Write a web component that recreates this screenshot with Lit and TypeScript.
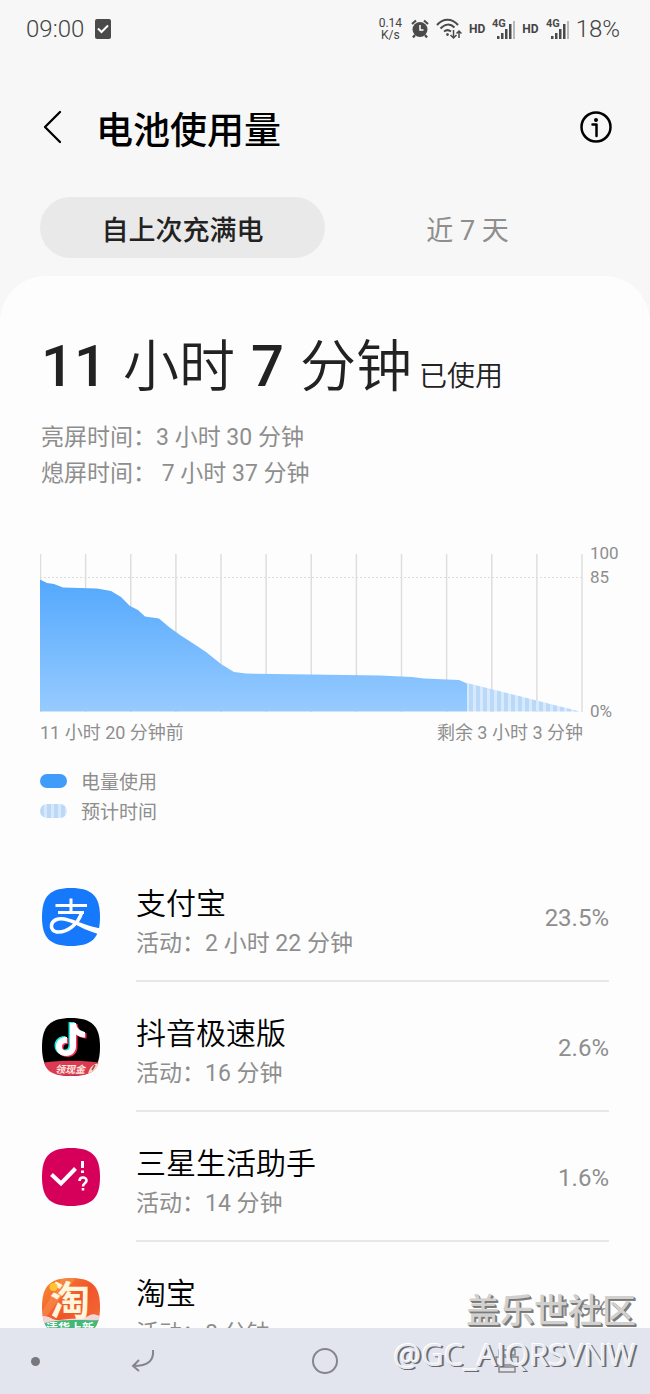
import { LitElement, html, svg, css } from "lit";
import { customElement, state } from "lit/decorators.js";

const SQUIRCLE = "M29 0C50 0 58 8 58 29S50 58 29 58 0 50 0 29 8 0 29 0Z";

const alipay = svg`
  <path d=${SQUIRCLE} fill="#1678fb"/>
  <g fill="none" stroke="#fff">
    <path d="M13.500 17.500H45M16 24.500H42M29 10.500V24" stroke-width="3"/>
    <path d="M39.500 25C36 36 26 44 16.500 44C11 44 9 40.500 9.500 37C10.500 32 16 30 22 31C31 32.500 40 38.500 57 42" stroke-width="3.600"/>
  </g>
  <path d="M33 33.500C41 37.500 49 39 57.500 40.500C57 43 56.500 44.500 56 46C46 43 38 39 31 35Z" fill="#fff"/>`;

const note = "M28 5H34C34.500 10 38 13.500 43 14V19.500C39.500 19.500 36.500 18.500 34 16.500V28C34 34 30 38 24 38C18 38 14 34 14 28.500C14 22.500 19 18.500 25 19V25C22 24.500 20 26 20 28.500C20 31 21.500 32.500 24 32.500C26.500 32.500 28 31 28 28Z";
const douyin = svg`
  <path d=${SQUIRCLE} fill="#000"/>
  <path d=${note} fill="#25e8e4" transform="translate(-1.500 -1)"/>
  <path d=${note} fill="#fb2b5a" transform="translate(1.500 1)"/>
  <path d=${note} fill="#fff"/>
  <path d="M2 44.500C18 42 40 42 56.500 44.500C54.500 54 46 58 29 58C12 58 4.500 54 2 44.500Z" fill="#dc3a50"/>
  <path d="M46 55.500C48 49 51 46 56.300 45.500C54.500 51 51.500 54 46 55.500Z" fill="#f8d9cf"/>
  <path d="M50 52L53 47" stroke="#a74a40" stroke-width="1.500"/>
  <text x="13" y="54.500" class="tiny italic" fill="#ffe9e2">领现金</text>`;

const assistant = svg`
  <path d=${SQUIRCLE} fill="#d6005b"/>
  <path d="M9.500 26.500L19 35.500L33.500 20.500" fill="none" stroke="#fff" stroke-width="4"/>
  <path d="M40.500 13V20M40.500 22.500V25" fill="none" stroke="#fff" stroke-width="3"/>
  <path d="M37.500 33C37.500 28.500 44.500 28.500 44.500 32.500C44.500 35.500 41 35 41 38.500M41 40V42.500" fill="none" stroke="#fff" stroke-width="2.600"/>`;

const taobao = svg`
  <defs>
    <linearGradient id="tb" x1="0" y1="0" x2="1" y2="1">
      <stop offset="0" stop-color="#f98a35"/><stop offset=".5" stop-color="#f0552a"/><stop offset="1" stop-color="#f4713a"/>
    </linearGradient>
    <clipPath id="sq"><path d=${SQUIRCLE}/></clipPath>
  </defs>
  <g clip-path="url(#sq)">
    <rect width="58" height="58" fill="url(#tb)"/>
    <path d="M0 34L20 0H34L0 44Z" fill="#fba15e" opacity=".4"/>
    <path d="M0 38C8 37 10 43 18 42C28 40 42 42 48 37C52 35 55 37 58 38V58H0Z" fill="#f3d4d8"/>
    <path d="M0 46C18 40 42 43 58 42V58H0Z" fill="#42b978"/>
    <text x="8" y="37" class="tao" fill="#fff6dc">淘</text>
    <circle cx="11.500" cy="9" r="4" fill="#ffc52e"/>
    <text x="4" y="55" class="promo" fill="#fff">清货上新</text>
  </g>`;

const apps = [
  { name: "支付宝", time: "2 小时 22 分钟", share: "23.5%", icon: alipay },
  { name: "抖音极速版", time: "16 分钟", share: "2.6%", icon: douyin },
  { name: "三星生活助手", time: "14 分钟", share: "1.6%", icon: assistant },
  { name: "淘宝", time: "8 分钟", share: "1.6%", icon: taobao },
];

@customElement("battery-chart")
class BatteryChart extends LitElement {
  static styles = css`
    :host { display: block; color: #8e8e8e; font-size: 17px; line-height: 24px; }
    .chart { display: grid; grid-template-columns: 1fr 30px; column-gap: 7px; }
    .plot { display: block; width: 100%; height: 158px; margin: 13px 0 11px; }
    .scale { display: flex; flex-direction: column; }
    .zero { margin-top: auto; }
    .range { display: flex; justify-content: space-between; margin: -2px 37px 0 0; font-size: 18px; }
    .legend { list-style: none; margin: 23px 0 0; padding: 0; font-size: 19px; line-height: 30px; }
    .legend li { display: flex; align-items: center; gap: 14px; }
    .key { width: 27px; height: 14px; border-radius: 7px; background: #409cf8; margin-bottom: 4px; }
    .estimate { background: repeating-linear-gradient(90deg, #bcd8f6 0 4px, #d6e8fb 4px 7px); }
  `;
  render() {
    const lines = Array.from({ length: 13 }, (_, i) => 0.5 + i * 45.125);
    return html`
      <div class="chart">
        <svg class="plot" viewBox="0 0 543 158" preserveAspectRatio="none" role="img" aria-label="电量使用">
          <defs>
            <linearGradient id="fill" x1="0" y1="0" x2="0" y2="1">
              <stop offset="0" stop-color="#53a8fd"/><stop offset="1" stop-color="#97cbff"/>
            </linearGradient>
            <pattern id="bars" width="7" height="200" patternUnits="userSpaceOnUse">
              <rect width="7" height="200" fill="#d6e9fd"/><rect x="2" width="4" height="200" fill="#bad8f7"/>
            </pattern>
          </defs>
          <path d="M0 23.500H542" stroke="#dcdcdc" stroke-dasharray="2 2"/>
          ${lines.map((x) => svg`<path d="M${x} 0V158" stroke="#dedede" stroke-width="1.500"/>`)}
          <path d="M427 129L540 157.500H427Z" fill="url(#bars)"/>
          <path d="M0 25.500L7 29L14 30L23 33.500L57 34.500L71 37L81 43L90 52L98 56L105 62.500L119 64.500L129 73L140 81L154 90L166 98L181 110L194 118L206 119.500L270 120.500L340 121.500L372 123L384 124.500L419 126L427 129.500V157.500H0Z" fill="url(#fill)"/>
        </svg>
        <div class="scale"><span>100</span><span>85</span><span class="zero">0%</span></div>
      </div>
      <div class="range"><span>11 小时 20 分钟前</span><span>剩余 3 小时 3 分钟</span></div>
      <ul class="legend">
        <li><span class="key"></span>电量使用</li>
        <li><span class="key estimate"></span>预计时间</li>
      </ul>`;
  }
}

@customElement("status-bar")
class StatusBar extends LitElement {
  static styles = css`
    :host { display: flex; align-items: center; height: 58px; padding: 0 30px 0 26px; color: #444; font-size: 24px; line-height: 28px; }
    .left, .right { display: flex; align-items: center; }
    .left { gap: 11px; flex: 1; }
    .right { gap: 7px; }
    .light { font-weight: 300; }
    .speed { font-size: 12px; line-height: 12px; text-align: center; margin-right: 2px; }
    .hd { font-size: 12px; font-weight: 700; }
    .net { font: 700 11px Roboto, sans-serif; }
    svg { display: block; }
  `;
  signal() {
    return html`<svg width="23" height="24" viewBox="0 0 23 24" fill="#4a4a4a">
      <text x="0" y="10" class="net">4G</text>
      <rect x="5" y="19" width="2.500" height="3"/><rect x="9" y="16" width="2.500" height="6"/>
      <rect x="13" y="12" width="2.500" height="10"/><rect x="17" y="7" width="2.500" height="15"/>
      <rect x="21" y="4" width="2" height="18" fill="#b9b9b9"/></svg>`;
  }
  render() {
    return html`
      <div class="left"><span class="light">09:00</span>
        <svg width="16" height="20" viewBox="0 0 16 20"><rect width="16" height="20" rx="2" fill="#4a4a4a"/><path d="M3 9.500L6.500 13L13 6.500" fill="none" stroke="#fff" stroke-width="2"/></svg>
      </div>
      <div class="right">
        <span class="speed">0.14<br/>K/s</span>
        <svg width="18" height="20" viewBox="0 0 18 20"><circle cx="9" cy="10.500" r="7.500" fill="#4a4a4a"/><path d="M1 5L5 1.500M17 5L13 1.500M4 16L2 18.500M14 16L16 18.500" stroke="#4a4a4a" stroke-width="2.200"/><path d="M9 6V11H12.500" fill="none" stroke="#fff" stroke-width="1.500"/></svg>
        <svg width="26" height="22" viewBox="0 0 26 22" fill="none" stroke="#4a4a4a" stroke-width="2"><path d="M1 7C7 0 16 0 22 7M4.500 10.500C9 5.500 14.500 5.500 18.500 9.500M8 13.500C10.500 11.500 12.500 11.500 15 13.500"/><circle cx="11.500" cy="16.500" r="1" fill="#4a4a4a" stroke-width="1"/><path d="M17.500 12V20M14.500 17L17.500 20L20.500 17M23 20V13M20.500 15.500L23 13L25.500 15.500" stroke-width="1.500"/></svg>
        <span class="hd">HD</span>${this.signal()}<span class="hd">HD</span>${this.signal()}
        <span class="light">18%</span>
      </div>`;
  }
}

@customElement("app-root")
class AppRoot extends LitElement {
  @state() tab = 0;
  static styles = css`
    * { box-sizing: border-box; }
    :host { display: flex; flex-direction: column; height: 100vh; position: relative; overflow: hidden; background: #f7f7f7; color: #222; font-family: Roboto, "Noto Sans CJK SC", sans-serif; }
    button { font: inherit; color: inherit; background: none; border: 0; padding: 0; cursor: pointer; }
    svg { display: block; }
    .header { display: flex; align-items: center; height: 137px; padding: 0 38px 0 40px; color: #000; flex: none; }
    .back { width: 56px; }
    h1 { flex: 1; margin: 0; padding-top: 10px; font-size: 37px; line-height: 44px; font-weight: 500; }
    .tabs { display: grid; grid-template-columns: 1fr 1fr; padding: 0 40px; margin: 2px 0 18px; flex: none; }
    .tab { height: 61px; border-radius: 31px; font-size: 27px; line-height: 32px; padding-top: 6px; color: #8e8e8e; }
    .active { background: #e9e9e9; color: #222; font-weight: 500; }
    .card { flex: 1; min-height: 0; overflow: hidden; background: #fdfdfd; border-radius: 46px 46px 0 0; padding-top: 50px; }
    .summary { padding: 0 41px; }
    .total { display: flex; align-items: baseline; gap: 16px; margin: 0; font-size: 56px; line-height: 80px; font-weight: 350; white-space: nowrap; }
    .total b { font-size: 58px; font-weight: 500; }
    .total small { font-size: 28px; margin-left: -9px; }
    .times { margin: 3px 0 0; font-size: 23px; line-height: 36px; color: #8e8e8e; white-space: pre-wrap; }
    .graph { display: block; margin: 49px 30px 0 40px; }
    .apps { list-style: none; margin: 24px 0 0; padding: 0 41px; }
    .row { display: grid; grid-template-columns: 59px 1fr; column-gap: 36px; align-items: center; width: 100%; text-align: left; }
    .icon { width: 58px; height: 58px; margin: 0 1px; }
    .detail { display: flex; align-items: center; justify-content: space-between; height: 130px; border-bottom: 2px solid #e7e7e7; color: #8e8e8e; font-size: 23px; line-height: 40px; }
    .text { padding-top: 16px; }
    .name { display: block; color: #000; font-size: 30px; font-weight: 350; }
    .share { font-size: 24px; padding-top: 4px; }
    .tiny { font: 700 10px "Noto Sans CJK SC", sans-serif; }
    .promo { font: 700 12px "Noto Sans CJK SC", sans-serif; }
    .italic { font-style: italic; }
    .tao { font: 700 40px "Noto Sans CJK SC", sans-serif; }
    .nav { display: grid; grid-template-columns: 52px 1fr 1fr 1fr 52px; align-items: center; justify-items: center; height: 66px; flex: none; background: #e2e5ee; }
    .dot { width: 9px; height: 9px; border-radius: 50%; background: #77787d; margin-left: 18px; }
    .mark { position: absolute; right: 14px; bottom: 18px; text-align: right; pointer-events: none; font-family: "Noto Sans CJK SC", sans-serif; white-space: nowrap; }
    .place { display: block; font-size: 34px; line-height: 46px; font-weight: 500; color: #d2d0ce; text-shadow: 1px 1px 0 #777, 2px 2px 0 #808080; }
    .user { display: block; font-family: "Open Sans", sans-serif; font-size: 31px; line-height: 44px; color: #e9ebf2; text-shadow: -1px -1px 0 #fff, 1px 1px 0 #66676c, 2px 1px 0 #77787d; }
  `;
  render() {
    return html`
      <status-bar></status-bar>
      <header class="header">
        <button class="back" aria-label="返回"><svg width="24" height="34" viewBox="0 0 24 34"><path d="M20 2L5 17L20 32" fill="none" stroke="#000" stroke-width="2.300" stroke-linecap="round" stroke-linejoin="round"/></svg></button>
        <h1>电池使用量</h1>
        <button aria-label="信息"><svg width="32" height="32" viewBox="0 0 32 32" fill="none" stroke="#000" stroke-width="2.500"><circle cx="16" cy="16" r="14.500"/><path d="M12.500 13.500H16.500V25" stroke-linejoin="round" stroke-linecap="round"/><circle cx="16" cy="9" r="2" fill="#000" stroke="none"/></svg></button>
      </header>
      <div class="tabs" role="tablist">
        ${["自上次充满电", "近 7 天"].map((label, i) => html`<button role="tab" aria-selected=${this.tab === i} class="tab ${this.tab === i ? "active" : ""}" @click=${() => (this.tab = i)}>${label}</button>`)}
      </div>
      <main class="card">
        <section class="summary">
          <h2 class="total"><b>11</b> <span>小时</span> <b>7</b> <span>分钟</span> <small>已使用</small></h2>
          <p class="times">亮屏时间：3 小时 30 分钟
熄屏时间： 7 小时 37 分钟</p>
        </section>
        <battery-chart class="graph"></battery-chart>
        <ul class="apps">
          ${apps.map((app) => html`<li><button class="row">
            <svg class="icon" viewBox="0 0 58 58" aria-hidden="true">${app.icon}</svg>
            <span class="detail"><span class="text"><span class="name">${app.name}</span>活动：${app.time}</span><span class="share">${app.share}</span></span>
          </button></li>`)}
        </ul>
      </main>
      <nav class="nav">
        <button class="dot" aria-label="隐藏导航栏"></button>
        <button aria-label="返回"><svg width="24" height="24" viewBox="0 0 24 24" fill="none" stroke="#85868b" stroke-width="2"><path d="M22 1C23 11 18 17 2 17M8 11L2 17L8 22"/></svg></button>
        <button aria-label="主页"><svg width="28" height="28" viewBox="0 0 28 28"><circle cx="14" cy="14" r="12" fill="none" stroke="#85868b" stroke-width="2"/></svg></button>
        <button aria-label="最近"><svg width="24" height="24" viewBox="0 0 24 24" fill="none" stroke="#85868b" stroke-width="1.500"><path d="M4 1H20V6H4ZM4 18H20V23H4ZM1 8H23V16H1Z"/></svg></button>
      </nav>
      <div class="mark"><span class="place">盖乐世社区</span><span class="user">@GC_AIQRSVNW</span></div>`;
  }
}
